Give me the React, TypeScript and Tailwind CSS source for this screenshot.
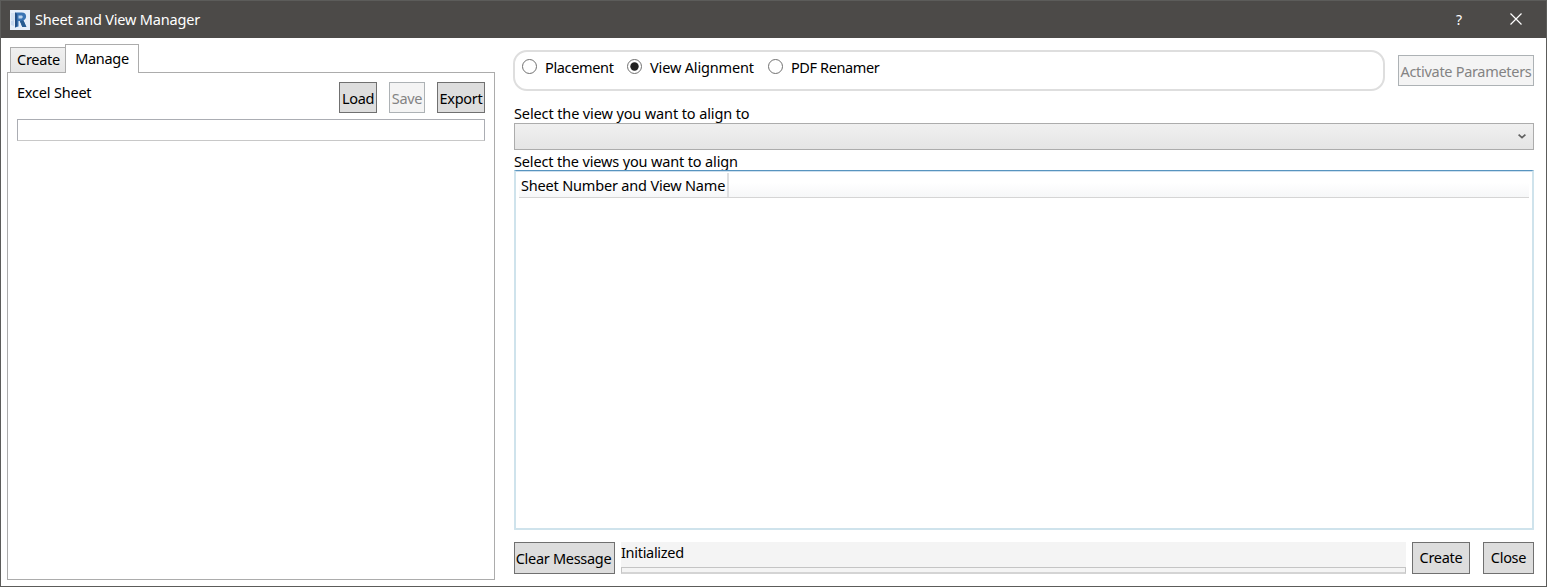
import type { ReactNode } from "react";

function PushButton({ className, disabled, children }: { className: string; disabled?: boolean; children: ReactNode }) {
  return (
    <button
      disabled={disabled}
      className={`flex shrink-0 items-center justify-center whitespace-nowrap border ${
        disabled ? "border-[#adb2b5] bg-[#f4f4f4] text-[#838383]" : "border-[#707070] bg-[#dddddd] text-black"
      } ${className}`}
    >
      {children}
    </button>
  );
}

function Radio({ className, checked, label }: { className: string; checked?: boolean; label: string }) {
  return (
    <label className={`flex shrink-0 items-center whitespace-nowrap ${className}`}>
      <svg className="mr-2 h-[15px] w-[15px] shrink-0" viewBox="0 0 15 15">
        <circle cx="7.5" cy="7.5" r="7" fill="#fff" stroke="#707070" />
        {checked && <circle cx="7.5" cy="7.5" r="4.2" fill="#212121" />}
      </svg>
      <span>{label}</span>
    </label>
  );
}

function RevitLogo() {
  return (
    <svg className="h-5 w-5 shrink-0" viewBox="0 0 20 20">
      <rect width="20" height="20" fill="#e6eefa" />
      <path d="M1 11 4 10v6l-3-1z" fill="#c5d7ef" />
      <path d="M1 3h4v7H1z" fill="#d3e1f3" />
      <path d="M5 2.500h6.700c3 0 4.400 1.400 4.400 3.800 0 2.100-1 3.400-2.700 4l3 6.700h-4l-2.600-6H8.500v5.500l-3.500.900z" fill="#3973b4" />
      <path d="M5 2.500 7.200 4v12l-2.200 1.400z" fill="#244f86" />
      <path d="M8.500 5.500h2.400c1.300 0 1.800.5 1.800 1.400s-.6 1.500-1.900 1.500H8.500z" fill="#b9d2ee" />
      <path d="m9.800 11 3.600-.7 3 6.700h-4z" fill="#285b91" />
    </svg>
  );
}

function TitleBar() {
  return (
    <header className="flex h-[38px] shrink-0 items-center border-t border-[#5c5c5a] bg-[#4c4a48] pl-[9px] text-white">
      <RevitLogo />
      <span className="ml-[5px] grow pb-0.5 tracking-[-0.18px]">Sheet and View Manager</span>
      <span className="mr-[46px] w-[10px] text-center text-[14px]">?</span>
      <svg className="mb-px mr-[24px] h-3 w-3" viewBox="0 0 12 12" stroke="#fff" strokeWidth="1.2">
        <path d="M.5.5l11 11M11.500.5l-11 11" />
      </svg>
    </header>
  );
}

function ManagePanel() {
  return (
    <section className="ml-[6px] mt-[6px] flex h-[536px] w-[488px] shrink-0 flex-col">
      <div className="z-10 -mb-px flex h-[29px] shrink-0 items-end pl-[3px]">
        <div className="-mr-px flex h-[26px] w-[56px] items-center justify-center border border-[#acacac] bg-linear-to-b from-[#f0f0f0] to-[#e5e5e5] pb-0.5 pl-px tracking-[-0.3px]">
          Create
        </div>
        <div className="flex h-[29px] w-[74px] items-center justify-center border border-b-0 border-[#acacac] bg-white pb-0.5 tracking-[-0.3px]">
          Manage
        </div>
      </div>
      <div className="flex grow flex-col border border-[#acacac] bg-white pl-[9px] pr-[9px] pt-[9px]">
        <div className="flex h-[31px]">
          <span className="grow tracking-[-0.2px]">Excel Sheet</span>
          <PushButton className="mr-3 w-[38px] tracking-[-0.3px]">Load</PushButton>
          <PushButton className="mr-3 w-[36px] tracking-[-0.3px]" disabled>Save</PushButton>
          <PushButton className="w-[48px] tracking-[-0.3px]">Export</PushButton>
        </div>
        <div className="mt-[6px] h-[22px] border border-[#abadb3] border-b-[#c8c8c8] bg-white" />
      </div>
    </section>
  );
}

function AlignmentPanel() {
  return (
    <section className="ml-[18px] flex w-[1021px] shrink-0 flex-col">
      <div className="mt-[12px] flex h-[41px] shrink-0">
        <div className="flex w-[872px] rounded-[14px] border-2 border-[#dedede] pl-[7px]">
          <Radio className="h-[29px] w-[105px] tracking-[-0.35px]" label="Placement" />
          <Radio className="h-[29px] w-[141px] tracking-[-0.15px]" checked label="View Alignment" />
          <Radio className="h-[29px] tracking-[-0.4px]" label="PDF Renamer" />
        </div>
        <PushButton className="ml-[13px] mt-[5px] h-[31px] w-[136px] tracking-[-0.3px]" disabled>
          Activate Parameters
        </PushButton>
      </div>
      <div className="mt-[12px] h-[20px] shrink-0 whitespace-nowrap pl-px leading-[21px] tracking-[-0.12px]">
        Select the view you want to align to
      </div>
      <div className="ml-px flex h-[27px] shrink-0 items-center justify-end border border-[#acacac] bg-linear-to-b from-[#f0f0f0] to-[#e5e5e5] pb-px pr-[7px]">
        <svg className="h-[5px] w-2" viewBox="0 0 8 5" fill="none" stroke="#606060" strokeWidth="1.700">
          <path d="M.6.7 4 3.700 7.400.7" />
        </svg>
      </div>
      <div className="h-[20px] shrink-0 whitespace-nowrap pl-px leading-[23px] tracking-[-0.15px]">
        Select the views you want to align
      </div>
      <div className="ml-px h-[360px] shrink-0 rounded-[1px] border-2 border-t border-[#cfe3ec] border-t-[#5794bf] bg-white px-[3px] shadow-[inset_0_1px_0_#cfe0ee]">
        <div className="mt-[2px] flex h-[25px] border-b border-[#d5d5d5] bg-linear-to-b from-white from-40% to-[#f6f7f8]">
          <div className="w-[210px] whitespace-nowrap border-r-2 border-[#dedfe1] pl-[2px] leading-[25px] tracking-[-0.18px]">
            Sheet Number and View Name
          </div>
        </div>
      </div>
      <footer className="ml-px mt-[12px] flex h-[32px] shrink-0">
        <PushButton className="w-[101px] pr-0.5 tracking-[-0.3px]">Clear Message</PushButton>
        <div className="ml-[6px] flex w-[785px] flex-col bg-[#f4f4f4]">
          <span className="h-[25px] leading-[20px] tracking-[-0.3px]">Initialized</span>
          <div className="h-[7px] border border-[#c4c4c4] border-b-2 border-b-[#d4d4d4]" />
        </div>
        <PushButton className="ml-[6px] w-[58px] pb-0.5 tracking-[-0.3px]">Create</PushButton>
        <PushButton className="ml-[13px] w-[51px] pb-0.5 tracking-[-0.3px]">Close</PushButton>
      </footer>
    </section>
  );
}

export default function App() {
  return (
    <div className="flex h-[587px] w-[1547px] flex-col overflow-hidden border border-t-0 border-[#5c5c5a] bg-white font-['Noto_Sans','Open_Sans',sans-serif] text-[14.5px] leading-5 text-black">
      <TitleBar />
      <main className="flex grow">
        <ManagePanel />
        <AlignmentPanel />
      </main>
    </div>
  );
}
